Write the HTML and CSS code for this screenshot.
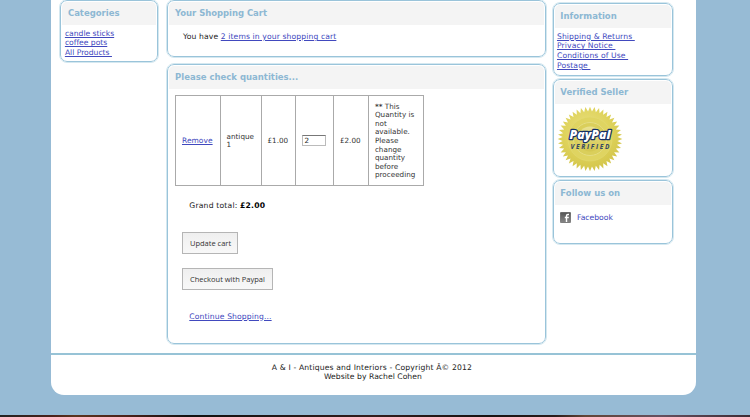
FILE: index.html
```
<!DOCTYPE html>
<html lang="en">
<head>
<meta charset="utf-8">
<title>A &amp; I - Antiques and Interiors</title>
<link rel="stylesheet" href="styles.css">
</head>
<body>
<div class="page">
  <div class="columns">
    <aside class="left">
      <section class="panel categories">
        <h2>Categories</h2>
        <ul class="links">
          <li><a href="#">candle sticks</a></li>
          <li><a href="#">coffee pots</a></li>
          <li><a href="#">All Products&nbsp;</a></li>
        </ul>
      </section>
    </aside>
    <main class="center">
      <section class="panel summary">
        <h2>Your Shopping Cart</h2>
        <p>You have <a href="#">2 items in your shopping cart</a></p>
      </section>
      <section class="panel cart">
        <h2>Please check quantities...</h2>
        <table>
          <colgroup><col class="c1"><col class="c2"><col class="c3"><col class="c4"><col class="c5"><col class="c6"></colgroup>
          <tr>
            <td class="remove"><a href="#">Remove</a></td>
            <td>antique<br>1</td>
            <td>£1.00</td>
            <td class="quantity"><input type="text" value="2"></td>
            <td>£2.00</td>
            <td><b>**</b> This<br>Quantity is<br>not<br>available.<br>Please<br>change<br>quantity<br>before<br>proceeding</td>
          </tr>
        </table>
        <p class="total">Grand total: <b>£2.00</b></p>
        <button class="update">Update cart</button>
        <button class="checkout">Checkout with Paypal</button>
        <p class="continue"><a href="#">Continue Shopping...</a></p>
      </section>
    </main>
    <aside class="right">
      <section class="panel information">
        <h2>Information</h2>
        <ul class="links">
          <li><a href="#">Shipping &amp; Returns&nbsp;</a></li>
          <li><a href="#">Privacy Notice&nbsp;</a></li>
          <li><a href="#">Conditions of Use&nbsp;</a></li>
          <li><a href="#">Postage&nbsp;</a></li>
        </ul>
      </section>
      <section class="panel verified">
        <h2>Verified Seller</h2>
        <svg class="seal" viewBox="-33 -33 66 66" width="66" height="66">
          <defs>
            <radialGradient id="gold" cx="45%" cy="35%" r="65%">
              <stop offset="0" stop-color="#e9df80"/><stop offset=".55" stop-color="#dfd35c"/><stop offset="1" stop-color="#d3c54a"/>
            </radialGradient>
            <linearGradient id="disc" x1="0" y1="0" x2="0" y2="1">
              <stop offset="0" stop-color="#e9e292"/><stop offset="1" stop-color="#d4c74f"/>
            </linearGradient>
          </defs>
          <polygon id="burst" fill="url(#gold)"/>
          <circle r="22" fill="#dfd461" stroke="#e3da72" stroke-width=".6"/>
          <circle r="16.5" fill="#dacf5b" stroke="#e5dd82" stroke-width="1"/>
          <circle r="12.5" fill="url(#disc)"/>
          <text class="brand" x="0" y="0" textLength="41" lengthAdjust="spacingAndGlyphs">PayPal</text>
          <text class="mark" x="0" y="10.4" textLength="39" lengthAdjust="spacing">VERIFIED</text>
        </svg>
      </section>
      <section class="panel follow">
        <h2>Follow us on</h2>
        <a class="social" href="#">
          <svg width="11" height="11" viewBox="0 0 11 11">
            <defs><linearGradient id="grey" x1="0" y1="0" x2="0" y2="1"><stop offset="0" stop-color="#555"/><stop offset="1" stop-color="#888"/></linearGradient></defs>
            <rect x=".3" y=".3" width="10.4" height="10.4" rx="1" fill="url(#grey)" stroke="#555" stroke-width=".6"/>
            <path d="M9 2.5H7.9Q6.5 2.5 6.5 4V10M4.8 5.5H8.8" fill="none" stroke="#fff" stroke-width="1.4"/>
          </svg>
          <span>Facebook</span>
        </a>
      </section>
    </aside>
  </div>
  <footer>A &amp; I - Antiques and Interiors - Copyright Â© 2012<br><span class="credit">Website by Rachel Cohen</span></footer>
</div>
<div class="edge"></div>
<script src="seal.js"></script>
</body>
</html>
```
FILE: styles.css
```
* { box-sizing: border-box; }
body {
  margin: 0;
  height: 417px;
  overflow: hidden;
  display: flex;
  flex-direction: column;
  background: #97bbd5;
  font: 7.65px/9.7px "DejaVu Sans", Verdana, sans-serif;
  color: #222;
}
.page {
  width: 645.6px;
  height: 394.6px;
  margin-left: 50.6px;
  background: #fff;
  border-radius: 0 0 13px 13px;
}
.columns { display: flex; height: 353px; }
.left { width: 98px; margin-left: 9.8px; }
.center { width: 378.6px; margin-left: 8.6px; }
.right { width: 120px; margin-left: 7.4px; padding-top: 3px; }
.panel {
  border: 1.5px solid #9ac4da;
  outline: .5px solid #d5e8f0;
  outline-offset: -.2px;
  border-radius: 7px;
  background: #fff;
  padding: 1px;
}
h2 {
  margin: 0;
  height: 23px;
  padding-left: 5.5px;
  border-radius: 5px 5px 0 0;
  background: #f4f4f4;
  color: #8db8d3;
  font-size: 8.5px;
  line-height: 22px;
  font-weight: bold;
}
.right h2 { padding-left: 5.4px; line-height: 23px; }
a { color: #4149be; }
p { margin: 0; }
.links { margin: 3.5px 0 0 2.5px; padding: 0; list-style: none; line-height: 9.8px; }
.left .links { letter-spacing: -.02px; }
.right .links { margin-left: 2px; letter-spacing: .1px; }
.categories { height: 62px; }
.summary { height: 57px; }
.summary p { margin: 7px 0 0 14px; letter-spacing: .11px; }
.cart { height: 279.5px; margin-top: 7px; }
.cart h2 { padding-left: 6px; }
.summary h2 { padding-left: 6px; letter-spacing: -.05px; }
table {
  width: 248.4px;
  height: 91px;
  margin: 6px 0 0 6px;
  border-collapse: collapse;
  table-layout: fixed;
  font-size: 7.2px;
  line-height: 8.55px;
  color: #333;
}
td { border: 1px solid #aaa; padding: 1.6px 0 0 5.5px; white-space: nowrap; letter-spacing: .03px; }
td.remove { font-size: 7.5px; padding-left: 6px; }
td.quantity { padding-top: 0; padding-left: 6px; }
.c1 { width: 45px; } .c2 { width: 41px; } .c3 { width: 34.4px; }
.c4 { width: 38px; } .c5 { width: 35px; } .c6 { width: 55px; }
input {
  display: block;
  width: 24px;
  height: 11px;
  padding: 0 1px;
  border: 1px solid #bbb;
  border-top-color: #777;
  font: 7.2px/9px "DejaVu Sans", sans-serif;
  color: #222;
}
.total { margin: 15px 0 0 20.3px; letter-spacing: .19px; }
.total b { color: #000; }
button {
  display: block;
  height: 22px;
  margin-left: 13.4px;
  padding: 0 0 0 6.6px;
  text-align: left;
  border: 1px solid #b5b5b5;
  background: linear-gradient(#efefef, #f8f8f8);
  color: #333;
  font: 7.5px "Open Sans", sans-serif;
}
.update { width: 56px; margin-top: 21px; }
.checkout { width: 91px; margin-top: 14px; }
.continue { margin: 22px 0 0 20.3px; letter-spacing: .12px; }
.information { height: 72.5px; }
.verified { height: 98px; margin-top: 3.5px; }
.follow { height: 63.5px; margin-top: 3px; }
.seal { display: block; margin: 2.2px 0 0 2.4px; }
.brand, .mark { text-anchor: middle; font-family: "Open Sans", sans-serif; font-style: italic; font-weight: bold; }
.brand { font-size: 11.5px; font-weight: 800; fill: #fff; stroke: #163065; stroke-width: 2.4px; paint-order: stroke; stroke-linejoin: round; }
.mark { font-size: 6.5px; fill: #334766; }
.social { display: flex; align-items: center; gap: 6px; margin: 7px 0 0 5px; text-decoration: none; }
footer {
  border-top: 2px solid #97c3d6;
  height: 41.6px;
  padding-top: 7.5px;
  padding-right: 3px;
  text-align: center;
  letter-spacing: .15px;
}
.credit { letter-spacing: .03px; padding-left: 2px; }
.edge {
  width: 750px;
  height: 2px;
  margin-top: 20.4px;
  background: linear-gradient(90deg, #222 0, #4a211b 7%, #5a3420 10%, #4a211b 17%, #111 25%, #321d1d 50%, #171313 65%, #2a1b1b 74%, #624538 78%, #665060 88%, #3d2c35);
}
```
FILE: seal.js
```
const spikes = 44;
const points = [];
for (let i = 0; i < spikes * 2; i++) {
  const radius = i % 2 ? 27.5 : 32.3;
  const angle = (i * Math.PI) / spikes;
  points.push((radius * Math.cos(angle)).toFixed(2) + "," + (radius * Math.sin(angle)).toFixed(2));
}
document.getElementById("burst").setAttribute("points", points.join(" "));
```
